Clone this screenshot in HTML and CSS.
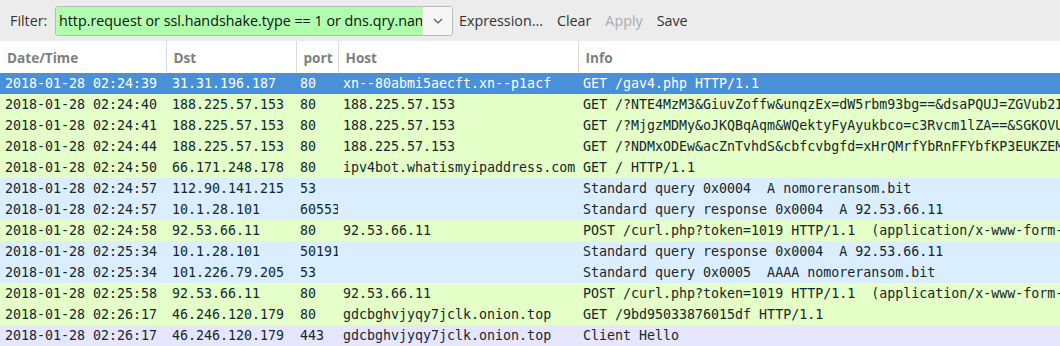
FILE: index.html
```html
<!DOCTYPE html>
<html>
<head>
<meta charset="utf-8">
<link rel="stylesheet" href="styles.css">
</head>
<body>
<div class="toolbar">
  <span class="label">Filter:</span>
  <div class="combo">
    <div class="filter-input">http.request or ssl.handshake.type == 1 or dns.qry.name</div>
    <div class="combo-btn">
      <svg width="10" height="6" viewBox="0 0 10 6"><path d="M1 1 L5 5 L9 1" fill="none" stroke="#555" stroke-width="1.2"/></svg>
    </div>
  </div>
  <span class="btn">Expression...</span>
  <span class="btn">Clear</span>
  <span class="btn disabled">Apply</span>
  <span class="btn">Save</span>
</div>
<table class="packets">
  <colgroup>
    <col class="c-time"><col class="c-dst"><col class="c-port"><col class="c-host"><col class="c-info">
  </colgroup>
  <thead>
    <tr><th>Date/Time</th><th>Dst</th><th>port</th><th>Host</th><th>Info</th></tr>
  </thead>
  <tbody>
    <tr class="sel"><td>2018-01-28 02:24:39</td><td>31.31.196.187</td><td>80</td><td>xn--80abmi5aecft.xn--p1acf</td><td>GET /gav4.php HTTP/1.1</td></tr>
    <tr class="http"><td>2018-01-28 02:24:40</td><td>188.225.57.153</td><td>80</td><td>188.225.57.153</td><td>GET /?NTE4MzM3&amp;GiuvZoffw&amp;unqzEx=dW5rbm93bg==&amp;dsaPQUJ=ZGVub2I1</td></tr>
    <tr class="http"><td>2018-01-28 02:24:41</td><td>188.225.57.153</td><td>80</td><td>188.225.57.153</td><td>GET /?MjgzMDMy&amp;oJKQBqAqm&amp;WQektyFyAyukbco=c3Rvcm1lZA==&amp;SGKOVUa</td></tr>
    <tr class="http"><td>2018-01-28 02:24:44</td><td>188.225.57.153</td><td>80</td><td>188.225.57.153</td><td>GET /?NDMxODEw&amp;acZnTvhdS&amp;cbfcvbgfd=xHrQMrfYbRnFFYbfKP3EUKZEMx</td></tr>
    <tr class="http"><td>2018-01-28 02:24:50</td><td>66.171.248.178</td><td>80</td><td>ipv4bot.whatismyipaddress.com</td><td>GET / HTTP/1.1</td></tr>
    <tr class="udp"><td>2018-01-28 02:24:57</td><td>112.90.141.215</td><td>53</td><td></td><td>Standard query 0x0004  A nomoreransom.bit</td></tr>
    <tr class="udp"><td>2018-01-28 02:24:57</td><td>10.1.28.101</td><td>60553</td><td></td><td>Standard query response 0x0004  A 92.53.66.11</td></tr>
    <tr class="http"><td>2018-01-28 02:24:58</td><td>92.53.66.11</td><td>80</td><td>92.53.66.11</td><td>POST /curl.php?token=1019 HTTP/1.1  (application/x-www-form-urlencoded)</td></tr>
    <tr class="udp"><td>2018-01-28 02:25:34</td><td>10.1.28.101</td><td>50191</td><td></td><td>Standard query response 0x0004  A 92.53.66.11</td></tr>
    <tr class="udp"><td>2018-01-28 02:25:34</td><td>101.226.79.205</td><td>53</td><td></td><td>Standard query 0x0005  AAAA nomoreransom.bit</td></tr>
    <tr class="http"><td>2018-01-28 02:25:58</td><td>92.53.66.11</td><td>80</td><td>92.53.66.11</td><td>POST /curl.php?token=1019 HTTP/1.1  (application/x-www-form-urlencoded)</td></tr>
    <tr class="http"><td>2018-01-28 02:26:17</td><td>46.246.120.179</td><td>80</td><td>gdcbghvjyqy7jclk.onion.top</td><td>GET /9bd95033876015df HTTP/1.1</td></tr>
    <tr class="tcp"><td>2018-01-28 02:26:17</td><td>46.246.120.179</td><td>443</td><td>gdcbghvjyqy7jclk.onion.top</td><td>Client Hello</td></tr>
  </tbody>
</table>
</body>
</html>
```

FILE: styles.css
```css
html, body {
  margin: 0;
  padding: 0;
  background: #ffffff;
  overflow: hidden;
}
body {
  width: 1060px;
  height: 346px;
  font-family: "Open Sans", "DejaVu Sans", sans-serif;
}
.toolbar {
  height: 41px;
  box-sizing: border-box;
  background: #ececec;
  display: flex;
  align-items: center;
  padding-left: 10px;
  font-size: 14.3px;
  color: #2e3436;
}
.label {
  width: 45px;
  flex: none;
  color: #2e3436;
}
.combo {
  display: flex;
  flex: none;
  width: 398px;
  height: 30px;
  box-sizing: border-box;
  border: 1px solid #b9b9b9;
  border-radius: 3px;
  overflow: hidden;
  margin-right: 6px;
}
.filter-input {
  flex: 1;
  min-width: 0;
  background: #afffaf;
  white-space: nowrap;
  overflow: hidden;
  line-height: 28px;
  padding-left: 3px;
  color: #101010;
}
.combo-btn {
  width: 29px;
  flex: none;
  background: #f6f6f6;
  border-left: 1px solid #dcdcdc;
  display: flex;
  align-items: center;
  justify-content: center;
}
.btn {
  margin-right: 14px;
  color: #2e3436;
}
.btn.disabled {
  color: #a9acac;
}
.packets {
  border-collapse: collapse;
  table-layout: fixed;
  width: 1060px;
}
.c-time { width: 166px; }
.c-dst { width: 130px; }
.c-port { width: 42px; }
.c-host { width: 240px; }
.c-info { width: 482px; }
.packets th {
  height: 32px;
  padding: 0 0 0 7px;
  text-align: left;
  font-family: "Open Sans", "DejaVu Sans", sans-serif;
  font-size: 13.6px;
  font-weight: 700;
  color: #7d7f80;
  border-left: 1px solid #dcdcdc;
  white-space: nowrap;
  overflow: hidden;
}
.packets th:first-child {
  border-left: none;
}
.packets td {
  height: 21px;
  padding: 0 0 0 5px;
  font-family: "DejaVu Sans Mono", monospace;
  font-size: 13.3px;
  color: #12272e;
  white-space: pre;
  overflow: hidden;
  text-overflow: clip;
}
.packets td:nth-child(2) { padding-left: 6px; }
.packets td:nth-child(3) { padding-left: 4px; }
tr.sel td { background: #4a90d9; color: #ffffff; }
tr.http td { background: #e4ffc7; }
tr.udp td { background: #daeeff; }
tr.tcp td { background: #e7e6ff; }
```
